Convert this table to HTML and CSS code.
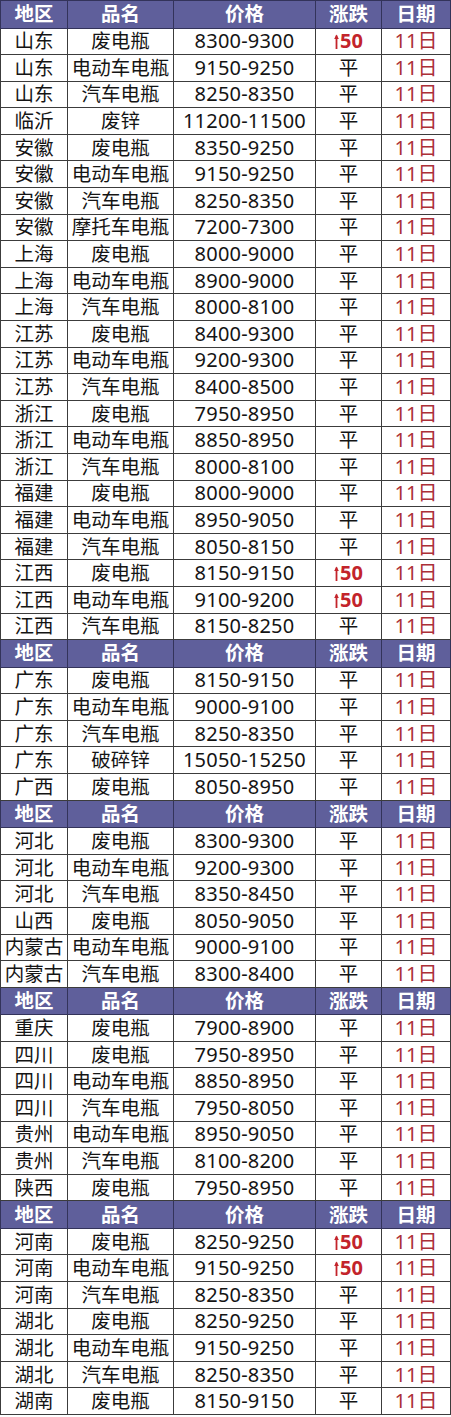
FILE: index.html
```html
<!DOCTYPE html>
<html lang="zh-CN">
<head>
<meta charset="utf-8">
<link rel="stylesheet" href="styles.css">
</head>
<body>
<table class="price">
<colgroup><col class="c1"><col class="c2"><col class="c3"><col class="c4"><col class="c5"></colgroup>
<tbody id="tb"></tbody>
</table>
<script src="app.js"></script>
</body>
</html>
```
FILE: app.js
```js
const groups = [
  [["山东","废电瓶","8300-9300","u"],["山东","电动车电瓶","9150-9250"],["山东","汽车电瓶","8250-8350"],["临沂","废锌","11200-11500"],["安徽","废电瓶","8350-9250"],["安徽","电动车电瓶","9150-9250"],["安徽","汽车电瓶","8250-8350"],["安徽","摩托车电瓶","7200-7300"],["上海","废电瓶","8000-9000"],["上海","电动车电瓶","8900-9000"],["上海","汽车电瓶","8000-8100"],["江苏","废电瓶","8400-9300"],["江苏","电动车电瓶","9200-9300"],["江苏","汽车电瓶","8400-8500"],["浙江","废电瓶","7950-8950"],["浙江","电动车电瓶","8850-8950"],["浙江","汽车电瓶","8000-8100"],["福建","废电瓶","8000-9000"],["福建","电动车电瓶","8950-9050"],["福建","汽车电瓶","8050-8150"],["江西","废电瓶","8150-9150","u"],["江西","电动车电瓶","9100-9200","u"],["江西","汽车电瓶","8150-8250"]],
  [["广东","废电瓶","8150-9150"],["广东","电动车电瓶","9000-9100"],["广东","汽车电瓶","8250-8350"],["广东","破碎锌","15050-15250"],["广西","废电瓶","8050-8950"]],
  [["河北","废电瓶","8300-9300"],["河北","电动车电瓶","9200-9300"],["河北","汽车电瓶","8350-8450"],["山西","废电瓶","8050-9050"],["内蒙古","电动车电瓶","9000-9100"],["内蒙古","汽车电瓶","8300-8400"]],
  [["重庆","废电瓶","7900-8900"],["四川","废电瓶","7950-8950"],["四川","电动车电瓶","8850-8950"],["四川","汽车电瓶","7950-8050"],["贵州","电动车电瓶","8950-9050"],["贵州","汽车电瓶","8100-8200"],["陕西","废电瓶","7950-8950"]],
  [["河南","废电瓶","8250-9250","u"],["河南","电动车电瓶","9150-9250","u"],["河南","汽车电瓶","8250-8350"],["湖北","废电瓶","8250-9250"],["湖北","电动车电瓶","9150-9250"],["湖北","汽车电瓶","8250-8350"],["湖南","废电瓶","8150-9150"]]
];
const arrow = '<svg class="arr" width="5" height="15" viewBox="0 0 5 15"><path d="M2.5 1.5V15" stroke="currentColor" stroke-width="1.8"/><path d="M0.2 5L2.5 0.5L4.8 5Z" fill="currentColor"/></svg>';
let html = "";
for (const g of groups) {
  html += '<tr class="hd"><th>地区</th><th>品名</th><th>价格</th><th>涨跌</th><th>日期</th></tr>';
  for (const r of g) {
    const ch = r[3] ? '<td class="up">' + arrow + '50</td>' : '<td>平</td>';
    html += '<tr><td>' + r[0] + '</td><td>' + r[1] + '</td><td class="num">' + r[2] + '</td>' + ch + '<td class="date">11日</td></tr>';
  }
}
document.getElementById("tb").innerHTML = html;
```
FILE: styles.css
```css
html, body { margin: 0; padding: 0; background: #fff; }
.price {
  width: 450px;
  border-collapse: collapse;
  table-layout: fixed;
  font-family: "Noto Sans", "Noto Sans CJK SC", sans-serif;
  font-size: 19.5px;
  color: #141414;
}
.c1 { width: 67px; }
.c2 { width: 106px; }
.c3 { width: 142px; }
.c4 { width: 66px; }
.c5 { width: 69px; }
.price td, .price th {
  border: 1px solid #3c3c3c;
  padding: 0;
  text-align: center;
  white-space: nowrap;
  line-height: 20px;
  overflow: hidden;
}
.price tr { height: 26.6px; }
.price tr.hd { height: 27.5px; }
.hd th {
  background: #5f5f9b;
  color: #fff;
  font-weight: bold;
  font-size: 19.5px;
  border-color: #33335a;
}
.num { font-size: 20px; letter-spacing: 0.2px; }
.up { color: #c3242b; font-weight: bold; font-size: 20px; }
.arr { vertical-align: -1px; margin-right: 1px; }
.date { color: #ac2f37; font-size: 20px; }
```
